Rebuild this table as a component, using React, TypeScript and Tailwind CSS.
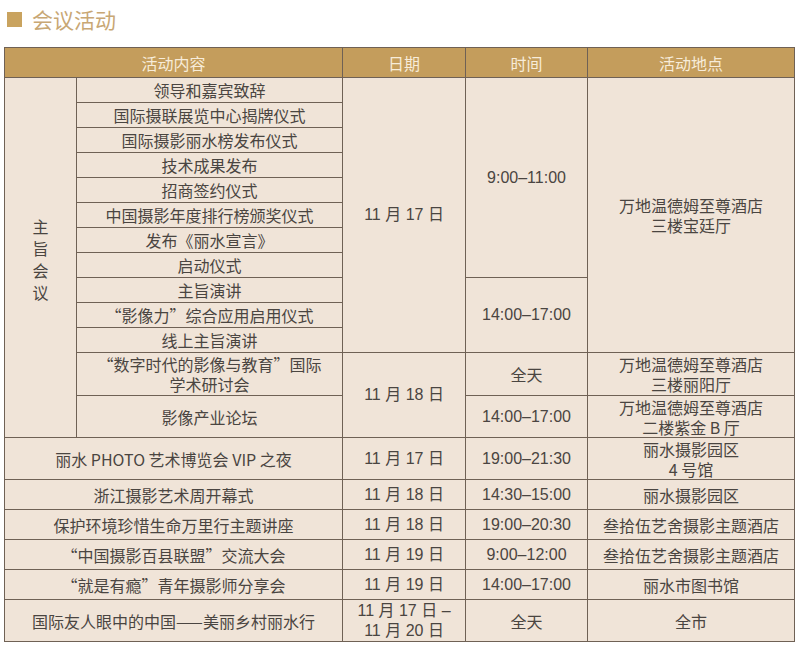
import React from "react";

const cell = "border border-[#6f6155] text-center align-middle p-0 leading-[20px]";
const num = cell + " font-['Liberation_Sans','Noto_Sans_CJK_SC',sans-serif]";

const mainItems = [
  "领导和嘉宾致辞",
  "国际摄联展览中心揭牌仪式",
  "国际摄影丽水榜发布仪式",
  "技术成果发布",
  "招商签约仪式",
  "中国摄影年度排行榜颁奖仪式",
  "发布《丽水宣言》",
  "启动仪式",
  "主旨演讲",
  "“影像力”综合应用启用仪式",
  "线上主旨演讲",
];

const others = [
  { name: "丽水 PHOTO 艺术博览会 VIP 之夜", date: "11 月 17 日", time: "19:00–21:30", place: ["丽水摄影园区", "4 号馆"], h: "h-[42px]" },
  { name: "浙江摄影艺术周开幕式", date: "11 月 18 日", time: "14:30–15:00", place: ["丽水摄影园区"], h: "h-[30px]" },
  { name: "保护环境珍惜生命万里行主题讲座", date: "11 月 18 日", time: "19:00–20:30", place: ["叁拾伍艺舍摄影主题酒店"], h: "h-[30px]" },
  { name: "“中国摄影百县联盟”交流大会", date: "11 月 19 日", time: "9:00–12:00", place: ["叁拾伍艺舍摄影主题酒店"], h: "h-[30px]" },
  { name: "“就是有瘾”青年摄影师分享会", date: "11 月 19 日", time: "14:00–17:00", place: ["丽水市图书馆"], h: "h-[30px]" },
];

export default function App() {
  return (
    <div
      className="w-[800px] h-[649px] bg-white text-[16px] text-[#4a4541]"
      style={{ fontFamily: '"Noto Sans CJK SC", "Noto Sans", sans-serif' }}
    >
      <div className="flex items-center h-[37px] pl-[7px] pt-[1px]">
        <span className="w-[15px] h-[15px] bg-[#c9a35f]" />
        <span className="ml-[10px] text-[21px] leading-none text-[#c8a774]">会议活动</span>
      </div>
      <div className="pl-[4px] pt-[10px]">
        <table className="table-fixed border-collapse w-[790px] border-[1.5px] border-[#6f6155]">
          <colgroup>
            <col className="w-[72px]" />
            <col className="w-[266px]" />
            <col className="w-[123px]" />
            <col className="w-[122px]" />
            <col className="w-[207px]" />
          </colgroup>
          <thead>
            <tr className="h-[30px] bg-[#c49d5c] text-[#f7ecd9]">
              <th colSpan={2} className={cell + " font-normal"}>活动内容</th>
              <th className={cell + " font-normal"}>日期</th>
              <th className={cell + " font-normal"}>时间</th>
              <th className={cell + " font-normal"}>活动地点</th>
            </tr>
          </thead>
          <tbody className="bg-[#f0e4d8]">
            {mainItems.map((item, i) => (
              <tr key={item} className="h-[25px]">
                {i === 0 && (
                  <td rowSpan={13} className={cell}>
                    <div className="flex flex-col items-center leading-[22px] pt-[2px]">
                      <span>主</span>
                      <span>旨</span>
                      <span>会</span>
                      <span>议</span>
                    </div>
                  </td>
                )}
                <td className={cell}>{item}</td>
                {i === 0 && (
                  <td rowSpan={11} className={num}>11 月 17 日</td>
                )}
                {i === 0 && (
                  <td rowSpan={8} className={num}>9:00–11:00</td>
                )}
                {i === 8 && (
                  <td rowSpan={3} className={num}>14:00–17:00</td>
                )}
                {i === 0 && (
                  <td rowSpan={11} className={cell}>
                    万地温德姆至尊酒店
                    <br />
                    三楼宝廷厅
                  </td>
                )}
              </tr>
            ))}
            <tr className="h-[43px]">
              <td className={cell}>
                “数字时代的影像与教育”国际
                <br />
                学术研讨会
              </td>
              <td rowSpan={2} className={num}>11 月 18 日</td>
              <td className={cell}>全天</td>
              <td className={cell}>
                万地温德姆至尊酒店
                <br />
                三楼丽阳厅
              </td>
            </tr>
            <tr className="h-[42px]">
              <td className={cell}>影像产业论坛</td>
              <td className={num}>14:00–17:00</td>
              <td className={cell}>
                万地温德姆至尊酒店
                <br />
                二楼紫金 B 厅
              </td>
            </tr>
            {others.map((r) => (
              <tr key={r.name} className={r.h}>
                <td colSpan={2} className={cell}>{r.name}</td>
                <td className={num}>{r.date}</td>
                <td className={num}>{r.time}</td>
                <td className={cell}>
                  {r.place.map((p, j) => (
                    <div key={j}>{p}</div>
                  ))}
                </td>
              </tr>
            ))}
            <tr className="h-[42px]">
              <td colSpan={2} className={cell}>国际友人眼中的中国——美丽乡村丽水行</td>
              <td className={num}>
                11 月 17 日 –
                <br />
                11 月 20 日
              </td>
              <td className={cell}>全天</td>
              <td className={cell}>全市</td>
            </tr>
          </tbody>
        </table>
      </div>
    </div>
  );
}
